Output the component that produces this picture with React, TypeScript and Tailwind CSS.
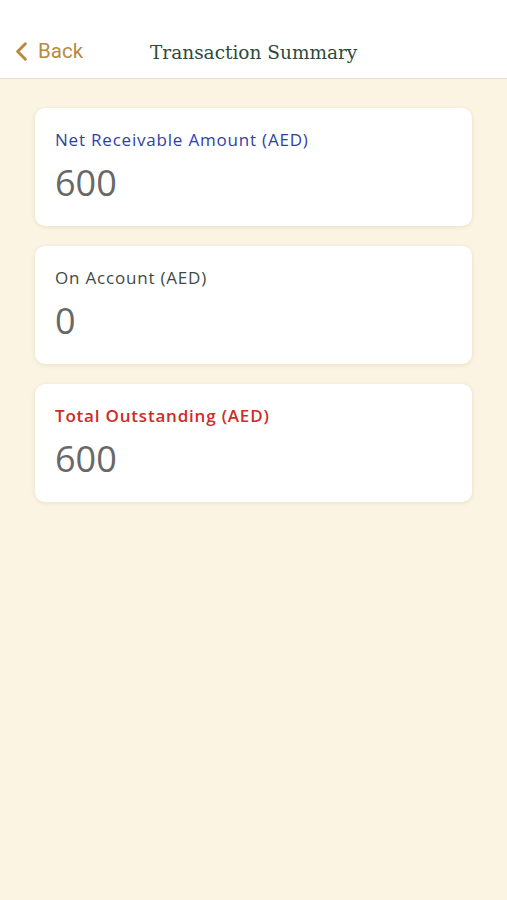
import { ChevronLeft } from "lucide-react";

const rows = [
  { label: "Net Receivable Amount (AED)", value: "600", color: "text-[#2f42a3]" },
  { label: "On Account (AED)", value: "0", color: "text-[#3f4b40]" },
  { label: "Total Outstanding (AED)", value: "600", color: "text-[#cf2b27] font-semibold" },
];

export default function App() {
  return (
    <div className="min-h-[900px] flex flex-col bg-[#fbf4e2]">
      {/* header */}
      <header className="h-[79px] bg-white border-b border-[#e4dccb] flex items-end pb-[11px] relative">
        <button className="flex items-center pl-[6px] text-[#b78a3f] font-['Roboto',sans-serif] text-[20.5px]">
          <ChevronLeft className="w-[31px] h-[31px]" strokeWidth={2.3} />
          <span className="ml-[1px]">Back</span>
        </button>
        <h1 className="absolute left-[150px] bottom-[11px] font-['DejaVu_Serif',serif] text-[18.5px] text-[#2e4a3a] leading-[28px]">
          Transaction Summary
        </h1>
      </header>

      {/* cards */}
      <main className="px-[35px] pt-[29px] flex flex-col gap-[20px]">
        {rows.map((r) => (
          <div
            key={r.label}
            className="h-[118px] bg-white rounded-[10px] shadow-[0_1px_4px_rgba(120,100,60,0.15)] px-[20px] pt-[20px]"
          >
            <p className={`font-['Open_Sans',sans-serif] text-[17px] tracking-[0.8px] leading-[24px] ${r.color}`}>{r.label}</p>
            <p className="mt-[11px] font-['Open_Sans',sans-serif] text-[36px] leading-[40px] text-[#686868]">{r.value}</p>
          </div>
        ))}
      </main>
    </div>
  );
}
